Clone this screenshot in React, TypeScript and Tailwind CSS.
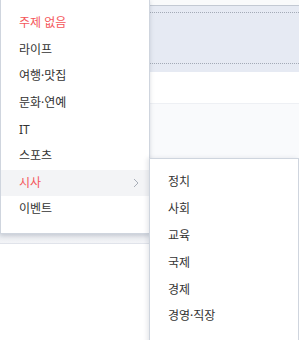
import React from 'react';

const topics = ['주제 없음', '라이프', '여행·맛집', '문화·연예', 'IT', '스포츠', '시사', '이벤트'];
const subTopics = ['정치', '사회', '교육', '국제', '경제', '경영·직장'];

const font = { fontFamily: '"Noto Sans", "Noto Sans CJK KR", sans-serif' };

export default function App() {
  return (
    <div className="relative w-[299px] h-[340px] overflow-hidden bg-white" style={font}>
      {/* Background page */}
      <div className="flex flex-col">
        <div className="h-[6px] bg-[#f9fafb] border-b border-[#c3c9d3]" />
        <div className="h-[66px] bg-[#e6eaf3] pt-[6px]">
          <div className="h-[52px] border-y border-dotted border-[#a3aab6]" />
        </div>
        <div className="h-[31px] bg-white" />
        <div className="h-[55px] bg-[#f9fafc] border-t border-[#eef0f4]" />
        <div className="h-[76px] bg-white" />
        <div className="h-[10px] bg-gradient-to-b from-[#e9ecf0] to-[#f3f4f7] border-b border-[#e0e3ea]" />
        <div className="flex-1 bg-white" />
      </div>

      {/* Topic dropdown */}
      <div className="absolute left-0 top-[-1px] w-[150px] bg-white border border-[#cfd5de] shadow-[0_2px_4px_rgba(100,110,130,0.25)] py-[10px]">
        {topics.map((t, i) => {
          const active = i === 0 || i === 6;
          return (
            <div
              key={t}
              className={`h-[26.6px] flex items-center justify-between pl-[18px] pr-[10px] text-[12px] ${
                i === 6 ? 'bg-[#f3f4f6]' : ''
              } ${active ? 'text-[#f4565a]' : 'text-[#333]'}`}
            >
              <span>{t}</span>
              {i === 6 && (
                <svg width="6" height="10" viewBox="0 0 6 10" fill="none">
                  <path d="M1 1l4 4-4 4" stroke="#a8aeb8" strokeWidth="1" />
                </svg>
              )}
            </div>
          );
        })}
      </div>

      {/* Sub topic dropdown */}
      <div className="absolute left-[149px] top-[158px] w-[150px] h-[200px] bg-white border border-[#cfd5de] shadow-[-2px_0_4px_rgba(100,110,130,0.15)] py-[10px]">
        {subTopics.map((t) => (
          <div key={t} className="h-[26.8px] flex items-center pl-[18px] text-[12px] text-[#333]">
            {t}
          </div>
        ))}
      </div>
    </div>
  );
}
